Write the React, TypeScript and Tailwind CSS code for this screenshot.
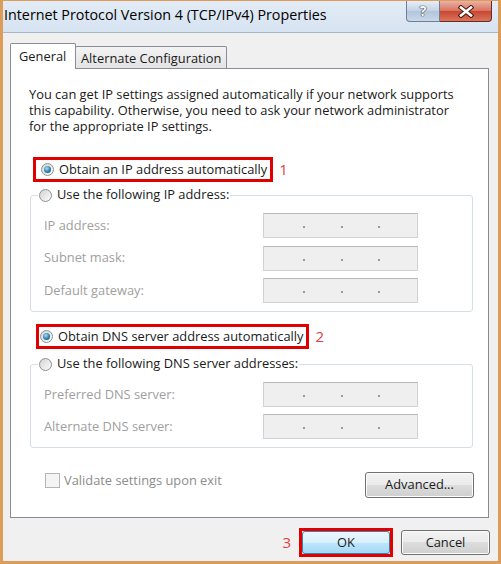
import React from "react";

const FONT = "font-['Open_Sans',sans-serif]";

function Radio({ checked }: { checked?: boolean }) {
  return (
    <span className="flex h-[13px] w-[13px] shrink-0 items-center justify-center rounded-full border border-[#8e8f8f] bg-[linear-gradient(135deg,#d4d4d4,#fbfbfb)]">
      {checked && (
        <span className="h-[7px] w-[7px] rounded-full bg-[radial-gradient(circle_at_40%_35%,#a6e0f8,#2a7fb0_55%,#18506f)]" />
      )}
    </span>
  );
}

function IpBox() {
  return (
    <div className="relative h-[25px] w-[155px] border border-[#d0d2d6] border-t-[#b5b7bb] bg-[#efefef]">
      <div className="flex h-full items-center pt-[3px]">
        <span className="ml-[39px] h-[2px] w-[2px] bg-[#9a9a9a]" />
        <span className="ml-[36px] h-[2px] w-[2px] bg-[#9a9a9a]" />
        <span className="ml-[35px] h-[2px] w-[2px] bg-[#9a9a9a]" />
      </div>
    </div>
  );
}

function Row({ label }: { label: string }) {
  return (
    <div className="flex h-[25px] items-center">
      <span className="w-[219px] text-[#a0a0a0]">{label}</span>
      <IpBox />
    </div>
  );
}

function CloseGlyph() {
  return (
    <svg width="16" height="13" viewBox="0 0 16 13">
      <g strokeLinecap="square">
        <line x1="3" y1="2.5" x2="13" y2="10.5" stroke="#4a1810" strokeWidth="4.6" />
        <line x1="13" y1="2.5" x2="3" y2="10.5" stroke="#4a1810" strokeWidth="4.6" />
        <line x1="3" y1="2.5" x2="13" y2="10.5" stroke="#ffffff" strokeWidth="2.6" />
        <line x1="13" y1="2.5" x2="3" y2="10.5" stroke="#ffffff" strokeWidth="2.6" />
      </g>
    </svg>
  );
}

export default function App() {
  return (
    <div className={`relative flex h-[564px] w-[501px] flex-col overflow-hidden border-x-[3px] border-b-[3px] border-t border-[#dc9c5a] bg-[#f0f0f0] text-[12.85px] text-[#1a1a1a] ${FONT}`}>
      {/* title bar */}
      <div className="flex h-[32px] shrink-0 items-start border-b border-[#aab6c4] bg-[linear-gradient(#e3ecf6,#d6e3f1)]">
        <div className="pl-[1px] pt-[4px] text-[14.3px] leading-[20px] text-black">
          Internet Protocol Version 4 (TCP/IPv4) Properties
        </div>
        <div className="ml-auto mr-[6px] flex">
          <div className="flex h-[21px] w-[34px] items-center justify-center rounded-bl-[4px] border border-t-0 border-[#6f7e91] bg-[linear-gradient(#e6eef7,#c2d2e4_50%,#b1c4da_50%,#c9d8e9)] text-[14px] font-bold leading-none text-white [text-shadow:0_0_1px_#2b3a4e,0_0_1px_#2b3a4e,0_0_1px_#2b3a4e]">
            ?
          </div>
          <div className="flex h-[21px] w-[52px] items-center justify-center rounded-br-[4px] border border-l-0 border-t-0 border-[#6b2a22] bg-[linear-gradient(#eab2a4,#d8715d_50%,#c9452f_50%,#d8745c)]">
            <CloseGlyph />
          </div>
        </div>
      </div>

      {/* client */}
      <div className="flex flex-1 flex-col pl-[7px] pr-[9px] pt-[10px]">
        {/* tabs */}
        <div className="relative z-10 -mb-px flex items-end">
          <div className="h-[26px] w-[66px] rounded-t-[2px] border border-b-0 border-[#898c95] bg-white pl-[8px] pt-[3px] leading-[18px]">
            General
          </div>
          <div className="mb-px ml-[-1px] h-[22px] w-[152px] rounded-t-[2px] border border-b-0 border-[#898c95] bg-[linear-gradient(#f3f3f3,#e3e3e3)] pl-[5px] pt-[2px] leading-[18px]">
            Alternate Configuration
          </div>
        </div>

        {/* panel */}
        <div className="flex h-[450px] flex-col border border-[#898c95] bg-white pl-[18px] pr-[14px] pt-[17px]">
          <p className="leading-[16px]">
            You can get IP settings assigned automatically if your network supports
            <br />
            this capability. Otherwise, you need to ask your network administrator
            <br />
            for the appropriate IP settings.
          </p>

          <div className="mt-[23px] flex items-center">
            <div className="ml-[4px] flex h-[25px] items-center gap-[5px] border-[3px] border-[#e00000] pl-[5px] pr-[3px]">
              <Radio checked />
              <span>Obtain an IP address automatically</span>
            </div>
            <span className="ml-[6px] text-[15px] text-[#e0414a]">1</span>
          </div>

          <fieldset className="ml-[1px] mr-[1px] mt-[5px] rounded-[3px] border border-[#d5dfe5]">
            <legend className="ml-[7px] flex h-[16px] items-center gap-[5px] px-[1px]">
              <Radio />
              <span>Use the following IP address:</span>
            </legend>
            <div className="flex flex-col gap-[7.5px] pb-[8px] pl-[13px] pt-[10px]">
              <Row label="IP address:" />
              <Row label="Subnet mask:" />
              <Row label="Default gateway:" />
            </div>
          </fieldset>

          <div className="mt-[12px] flex items-center">
            <div className="ml-[7px] flex h-[25px] items-center gap-[5px] border-[3px] border-[#e00000] pl-[1px] pr-[3px]">
              <Radio checked />
              <span>Obtain DNS server address automatically</span>
            </div>
            <span className="ml-[6px] text-[15px] text-[#e0414a]">2</span>
          </div>

          <fieldset className="ml-[1px] mr-[1px] mt-[7px] rounded-[3px] border border-[#d5dfe5]">
            <legend className="ml-[7px] flex h-[16px] items-center gap-[5px] px-[1px]">
              <Radio />
              <span>Use the following DNS server addresses:</span>
            </legend>
            <div className="flex flex-col gap-[7px] pb-[8px] pl-[13px] pt-[10px]">
              <Row label="Preferred DNS server:" />
              <Row label="Alternate DNS server:" />
            </div>
          </fieldset>

          <div className="mt-[23px] flex items-start justify-between">
            <div className="ml-[16px] flex items-center gap-[4px]">
              <span className="h-[15px] w-[15px] border border-[#b5b5b5] bg-[#f4f4f4]" />
              <span className="text-[#8d8d8d]">Validate settings upon exit</span>
            </div>
            <button className="mt-px h-[26px] w-[109px] rounded-[3px] border border-[#707070] bg-[linear-gradient(#f2f2f2,#ebebeb_50%,#dddddd_50%,#cfcfcf)] shadow-[inset_0_0_0_1px_#fcfcfc] text-[#1a1a1a]">
              Advanced...
            </button>
          </div>
        </div>

        {/* buttons */}
        <div className="mt-[10px] flex items-center justify-end">
          <span className="mr-[8px] text-[15px] text-[#e0414a]">3</span>
          <div className="border-[3px] border-[#e00000]">
            <button className="block h-[23px] w-[88px] rounded-[3px] border border-[#3c7fb1] bg-[linear-gradient(#eaf6fd,#d9f0fc_50%,#bee6fd_50%,#a7d9f5)] text-[#1a1a1a]">
              OK
            </button>
          </div>
          <button className="ml-[8px] mr-[-1px] h-[25px] w-[89px] rounded-[3px] border border-[#707070] bg-[linear-gradient(#f2f2f2,#ebebeb_50%,#dddddd_50%,#cfcfcf)] shadow-[inset_0_0_0_1px_#fcfcfc] text-[#1a1a1a]">
            Cancel
          </button>
        </div>
      </div>
    </div>
  );
}
